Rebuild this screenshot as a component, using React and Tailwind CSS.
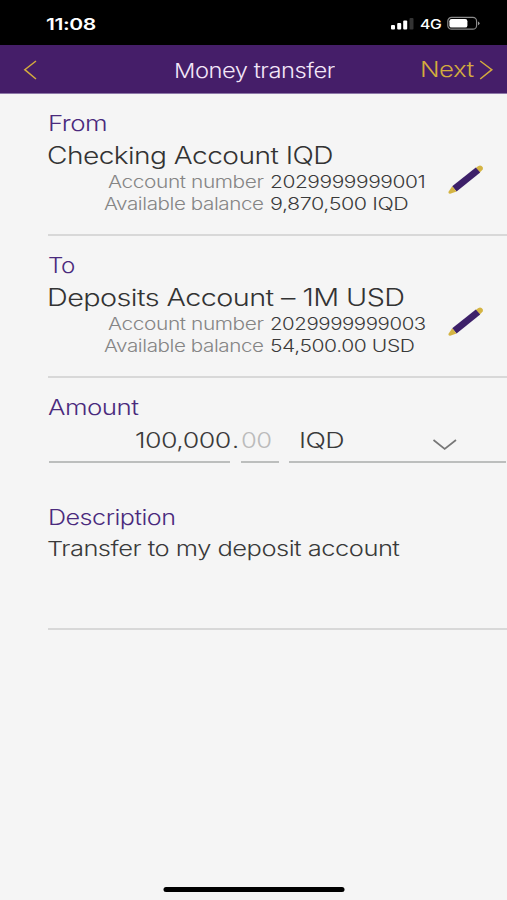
import { useLayoutEffect, useRef, useState } from "react";

// Extended lettering: stretches a line of text horizontally to a given width.
function Wide({ width, className = "", children }) {
  const ref = useRef(null);
  const [scale, setScale] = useState(1);
  useLayoutEffect(() => {
    setScale(width / ref.current.offsetWidth);
  }, [width, children]);
  return (
    <span className={`block shrink-0 ${className}`} style={{ width }}>
      <span
        ref={ref}
        className="inline-block origin-left whitespace-pre align-top tracking-[-0.02em]"
        style={{ transform: `scaleX(${scale})` }}
      >
        {children}
      </span>
    </span>
  );
}

function Pencil() {
  return (
    <svg className="h-[32px] w-[40px] shrink-0" viewBox="0 0 40 32">
      <path d="M29.8 4 32 2.2Q35 .6 36.8 3.2 37.6 5.4 35.8 6.4L33.8 8.4Z" fill="#d4b443" />
      <path d="M6.2 22.2 29.8 3.6 34.2 8.4 10.6 27.4Z" fill="#3d2069" />
      <path d="M6.2 22.2 2.4 28Q2.2 30 4.2 29.8L10.6 27.4Z" fill="#d4b443" />
    </svg>
  );
}

function Account({ title, titleWidth, name, nameWidth, number, numberWidth, balance, balanceWidth }) {
  return (
    <section className="ml-[48px] flex h-[142px] flex-col border-b-2 border-[#d8d8d8] pt-[15px]">
      <Wide width={titleWidth} className="h-[29px] text-[21.5px] leading-[28px] text-[#4a2a7d]">{title}</Wide>
      <div className="flex">
        <div className="w-[398px]">
          <Wide width={nameWidth} className="-ml-px h-[36px] text-[23.5px] leading-[35px] text-[#333]">{name}</Wide>
          <div className="-mt-px flex h-[22px] text-[17px] leading-[18px]">
            <Wide width={156} className="ml-[60px] text-[#858585]">Account number</Wide>
            <Wide width={numberWidth} className="ml-[6px] text-[#3a3a3a]">{number}</Wide>
          </div>
          <div className="flex h-[22px] text-[17px] leading-[18px]">
            <Wide width={160} className="ml-[56px] text-[#858585]">Available balance</Wide>
            <Wide width={balanceWidth} className="ml-[6px] text-[#3a3a3a]">{balance}</Wide>
          </div>
        </div>
        <button className="mt-[26px] h-[32px]"><Pencil /></button>
      </div>
    </section>
  );
}

export default function App() {
  return (
    <div className="flex h-[900px] w-[507px] flex-col overflow-hidden bg-[#f5f5f5] font-['Inter','Liberation_Sans',sans-serif] font-light">
      <div className="flex h-[45px] shrink-0 items-center bg-black text-white">
        <Wide width={50} className="ml-[46px] h-[20px] text-[16px] font-semibold leading-[22px]">11:08</Wide>
        <svg className="ml-[294px] h-[14px] w-[25px]" viewBox="0 0 25 14">
          <rect x="1" y="9" width="4" height="4.6" rx="1" fill="#fff" />
          <rect x="7.2" y="7" width="4" height="6.6" rx="1" fill="#fff" />
          <rect x="13.2" y="4.4" width="4" height="9.2" rx="1" fill="#fff" />
          <rect x="19.5" y="2" width="4" height="11.6" rx="1" fill="#333" />
        </svg>
        <Wide width={21} className="ml-[5px] h-[20px] text-[13.5px] font-medium leading-[22px]">4G</Wide>
        <svg className="ml-[6px] h-[14px] w-[34px]" viewBox="0 0 34 14">
          <rect x="0.8" y="1.4" width="28.8" height="11.8" rx="3.8" fill="none" stroke="#8a8a8a" strokeWidth="1.2" />
          <rect x="2.4" y="3" width="18" height="8.6" rx="2.2" fill="#fff" />
          <path d="M31 5.4Q32.5 6 32.5 7.3T31 9.2Z" fill="#999" />
        </svg>
      </div>

      <header className="flex h-[49px] shrink-0 border-b border-[#8d78a8] bg-[#451e69] text-[#d3ab3e]">
        <svg className="ml-[23px] mt-[14px] h-[22px] w-[15px]" viewBox="0 0 15 22" fill="none" stroke="currentColor" strokeWidth="1.5">
          <path d="M13 2 1.8 10.7 13 20" />
        </svg>
        <Wide width={161} className="ml-[136px] h-[48px] text-[20.5px] leading-[52px] text-[#f3e6f8]">Money transfer</Wide>
        <Wide width={54} className="ml-[85px] h-[48px] text-[22px] leading-[48px]">Next</Wide>
        <svg className="ml-[5px] mt-[14px] h-[22px] w-[15px]" viewBox="0 0 15 22" fill="none" stroke="currentColor" strokeWidth="1.5">
          <path d="M1.2 2 12.8 10.7 1.2 20" />
        </svg>
      </header>

      <Account title="From" titleWidth={59} name="Checking Account IQD" nameWidth={286} number="2029999999001" numberWidth={155} balance="9,870,500 IQD" balanceWidth={139} />
      <Account title="To" titleWidth={27} name="Deposits Account – 1M USD" nameWidth={358} number="2029999999003" numberWidth={156} balance="54,500.00 USD" balanceWidth={145} />

      <section className="ml-[47px] pt-[16px]">
        <Wide width={90} className="ml-px h-[28px] text-[21px] leading-[28px] text-[#4a2a7d]">Amount</Wide>
        <div className="ml-[2px] flex h-[41px] text-[21.5px] leading-[36px] text-[#3a3a3a]">
          <div className="flex w-[181px] border-b-2 border-[#bcbebd]">
            <Wide width={96} className="ml-[86px]">100,000</Wide>
          </div>
          <Wide width={7} className="ml-[2px]">.</Wide>
          <div className="ml-[2px] w-[38px] border-b-2 border-[#bcbebd] text-[#bbb]">
            <Wide width={31}>00</Wide>
          </div>
          <div className="ml-[10px] flex w-[217px] border-b-2 border-[#bcbebd]">
            <Wide width={45} className="ml-[10px]">IQD</Wide>
            <svg className="ml-[88px] mt-[14px] h-[15px] w-[26px]" viewBox="0 0 26 15" fill="none" stroke="#777" strokeWidth="1.7">
              <path d="M1.5 4 12.7 13 24 4" />
            </svg>
          </div>
        </div>
      </section>

      <section className="ml-[48px] mt-[40px] h-[127px] shrink-0 border-b-2 border-[#d8d8d8]">
        <Wide width={128} className="h-[28px] text-[21px] leading-[30px] text-[#4a2a7d]">Description</Wide>
        <Wide width={353} className="-ml-px h-[34px] text-[20.5px] leading-[35px] text-[#3a3a3a]">Transfer to my deposit account</Wide>
      </section>

      <div className="mx-auto mb-[8px] mt-auto h-[5px] w-[181px] translate-x-[0.5px] rounded-full bg-black" />
    </div>
  );
}
